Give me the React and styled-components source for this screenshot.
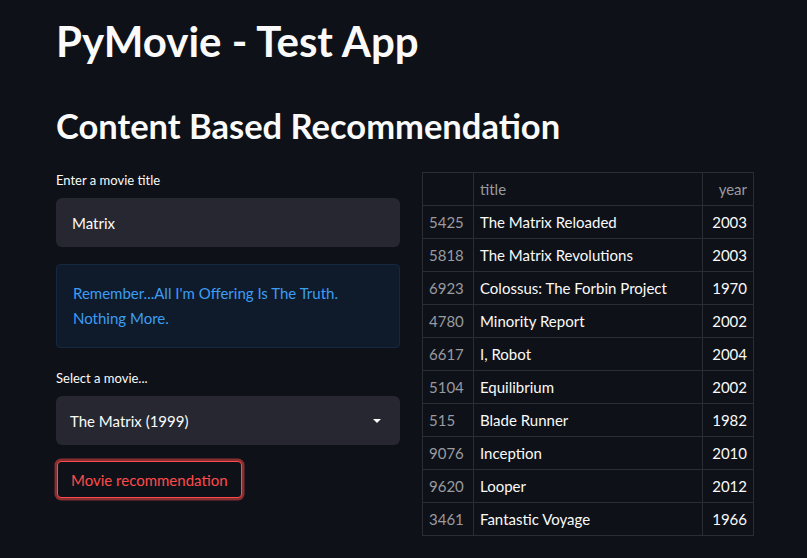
import React from "react";
import styled, { createGlobalStyle } from "styled-components";

const GlobalStyle = createGlobalStyle`
  body {
    margin: 0;
    background: #0e1117;
    color: #fafafa;
    font-family: "Lato", "Noto Sans", sans-serif;
  }
`;

const movies = [
  { id: 5425, title: "The Matrix Reloaded", year: 2003 },
  { id: 5818, title: "The Matrix Revolutions", year: 2003 },
  { id: 6923, title: "Colossus: The Forbin Project", year: 1970 },
  { id: 4780, title: "Minority Report", year: 2002 },
  { id: 6617, title: "I, Robot", year: 2004 },
  { id: 5104, title: "Equilibrium", year: 2002 },
  { id: 515, title: "Blade Runner", year: 1982 },
  { id: 9076, title: "Inception", year: 2010 },
  { id: 9620, title: "Looper", year: 2012 },
  { id: 3461, title: "Fantastic Voyage", year: 1966 },
];

const App = () => {
  return (
    <Page>
      <GlobalStyle />
      <Title>PyMovie - Test App</Title>
      <Subtitle>Content Based Recommendation</Subtitle>
      <Columns>
        <LeftCol>
          <Label>Enter a movie title</Label>
          <InputBox>Matrix</InputBox>
          <Info>Remember...All I'm Offering Is The Truth. Nothing More.</Info>
          <Label>Select a movie...</Label>
          <SelectBox>
            <span>The Matrix (1999)</span>
            <svg width="10" height="6" viewBox="0 0 10 6">
              <path d="M1 1 L9 1 L5 5 Z" fill="#fafafa" />
            </svg>
          </SelectBox>
          <Button>Movie recommendation</Button>
        </LeftCol>
        <Table>
          <thead>
            <tr>
              <Th />
              <Th>title</Th>
              <Th $right>year</Th>
            </tr>
          </thead>
          <tbody>
            {movies.map((m) => (
              <tr key={m.id}>
                <IndexCell>{m.id}</IndexCell>
                <Td>{m.title}</Td>
                <Td $right>{m.year}</Td>
              </tr>
            ))}
          </tbody>
        </Table>
      </Columns>
    </Page>
  );
};

const Page = styled.div`
  padding: 15px 56px 0 56px;
  box-sizing: border-box;
  width: 807px;
  height: 558px;
  overflow: hidden;
`;

const Title = styled.h1`
  margin: 0;
  font-size: 42px;
  font-weight: 700;
  line-height: 52px;
`;

const Subtitle = styled.h2`
  margin: 36px 0 0;
  font-size: 34.5px;
  font-weight: 700;
  line-height: 46px;
`;

const Columns = styled.div`
  display: grid;
  grid-template-columns: 344px 332px;
  gap: 22px;
  margin-top: 23px;
  align-items: start;
`;

const LeftCol = styled.div`
  display: flex;
  flex-direction: column;
`;

const Label = styled.div`
  font-size: 13px;
  line-height: 16px;
  margin-bottom: 10px;
`;

const InputBox = styled.div`
  height: 49px;
  box-sizing: border-box;
  background: #262730;
  border-radius: 6px;
  padding: 0 16px;
  display: flex;
  align-items: center;
  font-size: 15px;
  margin-bottom: 17px;
`;

const Info = styled.div`
  box-sizing: border-box;
  height: 84px;
  background: #0f1b2b;
  border: 1px solid #15283f;
  border-radius: 4px;
  padding: 16px 16px;
  color: #3d9df3;
  font-size: 15px;
  line-height: 25px;
  margin-bottom: 22px;
`;

const SelectBox = styled.div`
  height: 49px;
  box-sizing: border-box;
  background: #262730;
  border-radius: 6px;
  padding: 0 18px 0 14px;
  display: flex;
  align-items: center;
  justify-content: space-between;
  font-size: 15px;
  margin-bottom: 16px;
`;

const Button = styled.button`
  align-self: flex-start;
  height: 37px;
  padding: 0 13px;
  background: #0e1117;
  border: 1px solid #ff4b4b;
  border-radius: 4px;
  box-shadow: 0 0 0 2.5px rgba(255, 75, 75, 0.5);
  color: #ff4b4b;
  font-family: inherit;
  font-size: 15px;
  margin-left: 1px;
`;

const Table = styled.table`
  border-collapse: collapse;
  width: 332px;
  font-size: 15px;
  border: 1px solid #2b2d34;
`;

const Th = styled.th`
  height: 32px;
  border: 1px solid #2b2d34;
  padding: 0 6px;
  font-weight: 400;
  color: #999ba0;
  text-align: ${(p) => (p.$right ? "right" : "left")};
  &:first-child {
    width: 38px;
  }
  &:last-child {
    width: 38px;
  }
`;

const Td = styled.td`
  height: 32px;
  border: 1px solid #2b2d34;
  padding: 0 6px;
  color: #fafafa;
  text-align: ${(p) => (p.$right ? "right" : "left")};
`;

const IndexCell = styled.td`
  height: 32px;
  border: 1px solid #2b2d34;
  padding: 0 6px;
  color: #999ba0;
`;

export default App;
